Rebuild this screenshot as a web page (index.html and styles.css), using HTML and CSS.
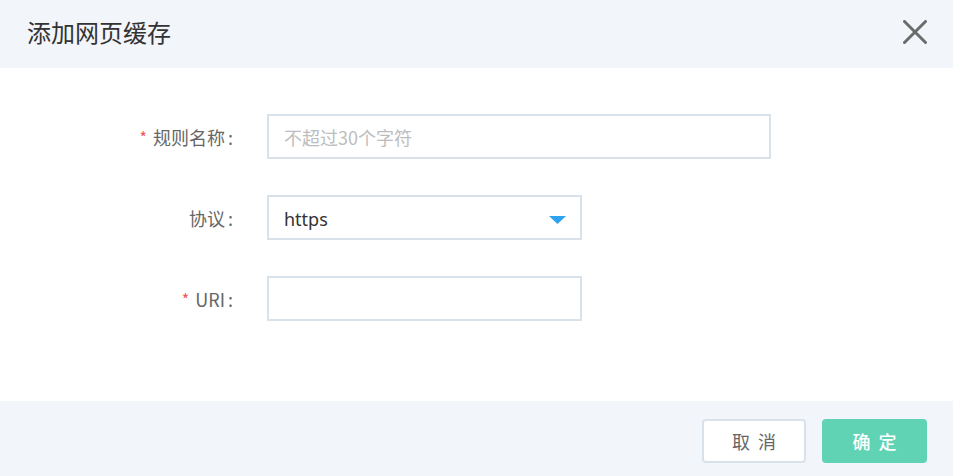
FILE: index.html
```html
<!DOCTYPE html>
<html lang="zh-CN">
<head>
<meta charset="utf-8">
<title>添加网页缓存</title>
<link rel="stylesheet" href="styles.css">
</head>
<body>
<div class="dialog">
  <header class="dlg-head">
    <h1 class="dlg-title">添加网页缓存</h1>
    <button class="dlg-close" aria-label="关闭">
      <svg width="24" height="24" viewBox="0 0 24 24"><path d="M1.5 1.5 L22.5 22.5 M22.5 1.5 L1.5 22.5" stroke="#6b6b6b" stroke-width="3" stroke-linecap="round" fill="none"/></svg>
    </button>
  </header>
  <main class="dlg-body">
    <div class="form-row">
      <label class="form-label"><span class="req">*</span>规则名称<span class="colon">:</span></label>
      <div class="field field-wide"><span class="placeholder">不超过30个字符</span></div>
    </div>
    <div class="form-row">
      <label class="form-label">协议<span class="colon">:</span></label>
      <div class="field field-select"><span class="value">https</span>
        <svg class="caret" width="17" height="8" viewBox="0 0 17 8"><path d="M0 0 H17 L8.5 8 Z" fill="#2ea3f2"/></svg>
      </div>
    </div>
    <div class="form-row">
      <label class="form-label"><span class="req">*</span>URI<span class="colon">:</span></label>
      <div class="field field-narrow"></div>
    </div>
  </main>
  <footer class="dlg-foot">
    <button class="btn btn-cancel">取 消</button>
    <button class="btn btn-ok">确 定</button>
  </footer>
</div>
</body>
</html>
```

FILE: styles.css
```css
* { box-sizing: border-box; }
html, body { margin: 0; padding: 0; }
body {
  width: 953px;
  height: 476px;
  overflow: hidden;
  background: #ffffff;
  font-family: "Noto Sans", "Noto Sans CJK SC", sans-serif;
  color: #333;
}
.dialog {
  display: flex;
  flex-direction: column;
  height: 476px;
}
.dlg-head {
  height: 68px;
  background: #f2f5fa;
  display: flex;
  align-items: center;
  justify-content: space-between;
  padding: 0 26px 0 27px;
}
.dlg-title {
  margin: 0;
  font-size: 24px;
  font-weight: 400;
  color: #333;
  line-height: 1;
  position: relative;
  top: -1px;
}
.dlg-close {
  border: 0;
  background: transparent;
  padding: 0;
  width: 24px;
  height: 24px;
  display: flex;
  position: relative;
  top: -2px;
}
.dlg-body {
  height: 333px;
  padding-top: 46px;
  display: flex;
  flex-direction: column;
  gap: 36px;
}
.form-row {
  display: flex;
  align-items: center;
  gap: 34px;
}
.form-label {
  width: 233px;
  text-align: right;
  font-size: 18px;
  color: #666;
  line-height: 1;
  font-family: "Noto Sans CJK SC", "Noto Sans", sans-serif;
}
.colon { margin-left: 3px; }
.req {
  color: #f25555;
  font-size: 16px;
  margin-right: 6px;
  position: relative;
  top: -1px;
}
.field {
  height: 45px;
  border: 2px solid #d9e1ea;
  background: #fff;
  display: flex;
  align-items: center;
  padding: 0 14px 0 15px;
  font-size: 18px;
}
.field-wide { width: 504px; }
.field-select { width: 315px; justify-content: space-between; }
.field-narrow { width: 315px; }
.placeholder {
  color: #bdbdbd;
  font-family: "Noto Sans CJK SC", "Noto Sans", sans-serif;
}
.value { color: #333; position: relative; top: 1px; }
.caret { position: relative; top: 2px; }
.dlg-foot {
  flex: 1;
  background: #f2f5fa;
  display: flex;
  justify-content: flex-end;
  align-items: flex-start;
  padding: 18px 26px 0 0;
  gap: 16px;
}
.btn {
  height: 44px;
  border-radius: 4px;
  font-size: 18px;
  font-family: "Noto Sans CJK SC", sans-serif;
  padding: 0;
  letter-spacing: 2px;
  text-indent: 2px;
  cursor: pointer;
}
.btn-cancel {
  width: 104px;
  background: #fff;
  border: 2px solid #d9e1ea;
  color: #666;
}
.btn-ok {
  width: 105px;
  background: #5fd3b4;
  border: 0;
  color: #fff;
  font-weight: 500;
}
```
